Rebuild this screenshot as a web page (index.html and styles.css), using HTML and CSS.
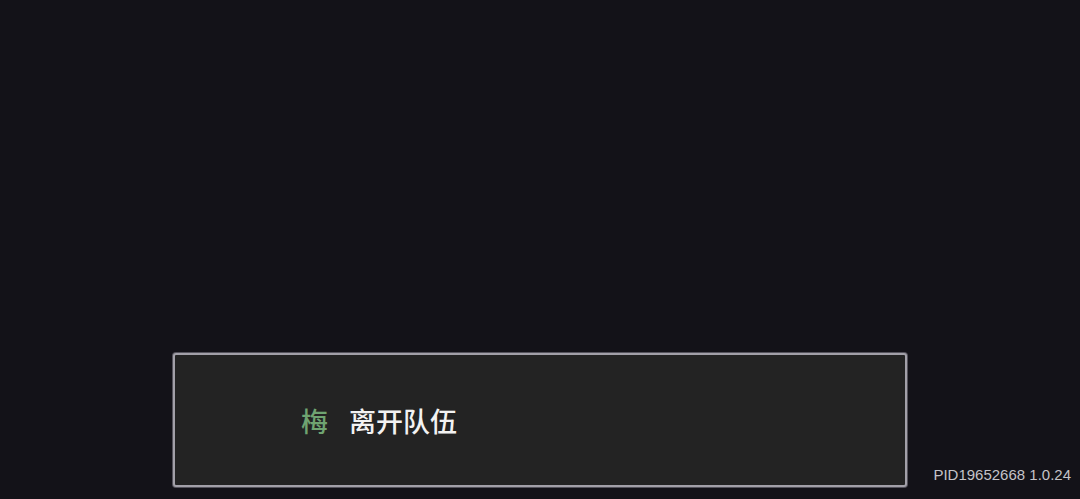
FILE: index.html
```html
<!DOCTYPE html>
<html lang="zh">
<head>
<meta charset="utf-8">
<link rel="stylesheet" href="styles.css">
</head>
<body>
<div class="screen">
  <div class="dialog">
    <span class="speaker">梅</span>
    <span class="message">离开队伍</span>
  </div>
  <div class="build">PID19652668 1.0.24</div>
</div>
</body>
</html>
```
FILE: styles.css
```css
html, body {
  margin: 0;
  padding: 0;
  background: #131218;
}
.screen {
  width: 1080px;
  height: 499px;
  display: flex;
  align-items: flex-end;
  box-sizing: border-box;
  padding: 0 9px 12px 173px;
}
.dialog {
  width: 734px;
  height: 134px;
  box-sizing: border-box;
  background: #232323;
  border: 2px solid #a2a0a8;
  box-shadow: 0 0 0 1px #55535c;
  border-radius: 3px;
  display: flex;
  align-items: center;
  padding-left: 126px;
  font-family: "Noto Sans CJK SC", sans-serif;
  font-size: 27px;
  font-weight: 500;
}
.speaker {
  color: #6fa471;
  margin-right: 21px;
}
.message {
  color: #f2f2f2;
}
.build {
  margin-left: auto;
  margin-bottom: 4px;
  font-family: "Liberation Sans", Arial, sans-serif;
  font-size: 15px;
  color: #c4c3c8;
}
```
